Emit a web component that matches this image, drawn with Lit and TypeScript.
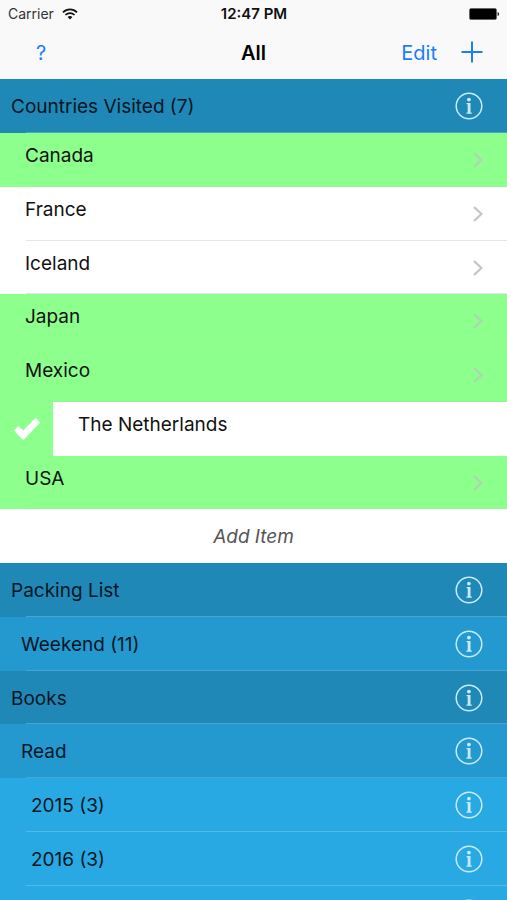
import { LitElement, html, css, svg, nothing } from "lit";
import { customElement, property, state } from "lit/decorators.js";
import { classMap } from "lit/directives/class-map.js";

interface Row {
  kind: "group" | "item" | "add";
  label?: string;
  depth?: number;
  done?: boolean;
  swiping?: boolean;
}

const ROWS: Row[] = [
  { kind: "group", label: "Countries Visited (7)", depth: 0 },
  { kind: "item", label: "Canada", done: true },
  { kind: "item", label: "France" },
  { kind: "item", label: "Iceland" },
  { kind: "item", label: "Japan", done: true },
  { kind: "item", label: "Mexico", done: true },
  { kind: "item", label: "The Netherlands", swiping: true },
  { kind: "item", label: "USA", done: true },
  { kind: "add", label: "Add Item" },
  { kind: "group", label: "Packing List", depth: 0 },
  { kind: "group", label: "Weekend (11)", depth: 1 },
  { kind: "group", label: "Books", depth: 0 },
  { kind: "group", label: "Read", depth: 1 },
  { kind: "group", label: "2015 (3)", depth: 2 },
  { kind: "group", label: "2016 (3)", depth: 2 },
  { kind: "group", depth: 2 },
];

const infoIcon = svg`<svg class="info-icon" viewBox="0 0 28 28" aria-hidden="true">
  <circle cx="14" cy="14" r="12.8" fill="none" stroke="currentColor" stroke-width="1.5"/>
  <circle cx="13.9" cy="7.6" r="1.9" fill="currentColor"/>
  <path d="M11.6 11H15.5V20.4H16.8V21.7H11.4V20.4H12.7V12.2H11.6Z" fill="currentColor"/>
</svg>`;

const chevron = svg`<svg class="chevron" viewBox="0 0 10 16" aria-hidden="true">
  <path d="M1 1L8.4 8L1 15" fill="none" stroke="currentColor" stroke-width="2.2"/>
</svg>`;

const check = svg`<svg class="check" viewBox="0 0 28 24" aria-hidden="true">
  <path d="M.8 13.6L5.4 9L10.2 13.6L22.6 .8L27.2 5.4L10.2 23.2Z" fill="currentColor"/>
</svg>`;

const buttonReset = css`
  button {
    margin: 0;
    padding: 0;
    border: 0;
    background: none;
    color: inherit;
    font: inherit;
    text-align: left;
    cursor: pointer;
  }
`;

@customElement("status-bar")
export class StatusBar extends LitElement {
  static styles = css`
    :host {
      display: grid;
      grid-template-columns: 1fr auto 1fr;
      align-items: center;
      height: 27px;
      padding: 0 7px 0 8px;
      color: #111;
    }
    .carrier {
      display: flex;
      align-items: center;
      gap: 8px;
      color: #333;
      font-size: 14px;
    }
    .time {
      font-size: 15px;
      font-weight: 600;
    }
    .wifi {
      width: 16px;
      height: 12px;
      color: #111;
    }
    .battery {
      justify-self: end;
      width: 31px;
      height: 12px;
    }
  `;

  render() {
    return html`
      <span class="carrier">
        Carrier
        <svg class="wifi" viewBox="0 0 16 12" role="img" aria-label="Wi-Fi">
          <path d="M1 4.3C5 .3 11 .3 15 4.3M3.4 7C6 4.5 10 4.5 12.6 7" fill="none" stroke="currentColor" stroke-width="1.7"/>
          <path d="M5.6 9C7 7.6 9 7.6 10.4 9L8 11.5Z" fill="currentColor"/>
        </svg>
      </span>
      <span class="time">12:47 PM</span>
      <svg class="battery" viewBox="0 0 31 12" role="img" aria-label="Battery full">
        <rect x="0.5" y="0.5" width="27" height="11" rx="1.5" fill="#000" stroke="#555" stroke-width="0.6"/>
        <path d="M28.6 4C30.6 4.4 30.6 7.6 28.6 8Z" fill="#222"/>
      </svg>
    `;
  }
}

@customElement("nav-bar")
export class NavBar extends LitElement {
  @property() heading = "";

  static styles = [
    buttonReset,
    css`
      :host {
        display: grid;
        grid-template-columns: 1fr auto 1fr;
        align-items: center;
        height: 52px;
        padding: 0 24px;
        color: #1a7efb;
        font-size: 20px;
        line-height: 24px;
      }
      h1 {
        margin: 0;
        color: #000;
        font-size: 20px;
        font-weight: 600;
      }
      .help {
        padding: 0 12px;
      }
      .actions {
        display: flex;
        justify-content: flex-end;
        align-items: flex-start;
        gap: 24px;
      }
      .plus {
        display: block;
        width: 22px;
        height: 22px;
      }
    `,
  ];

  render() {
    return html`
      <div><button type="button" class="help" aria-label="Help">?</button></div>
      <h1>${this.heading}</h1>
      <div class="actions">
        <button type="button">Edit</button>
        <button type="button" aria-label="Add list">
          <svg class="plus" viewBox="0 0 22 22" aria-hidden="true">
            <path d="M11 .5V21.5M.5 11H21.5" stroke="currentColor" stroke-width="2"/>
          </svg>
        </button>
      </div>
    `;
  }
}

@customElement("app-root")
export class AppRoot extends LitElement {
  @state() private rows = ROWS;

  static styles = [
    buttonReset,
    css`
      :host {
        display: flex;
        flex-direction: column;
        height: 100vh;
        overflow: hidden;
        background: #f9f9f9;
        color: #111;
        font-family: Inter, "Liberation Sans", sans-serif;
        font-size: 19px;
        line-height: 24px;
      }
      header {
        flex: none;
      }
      .list {
        flex: 1;
        min-height: 0;
        margin: 0;
        padding: 0;
        overflow-y: auto;
        scrollbar-width: none;
        list-style: none;
        background: #28a9e3;
      }
      .row {
        display: flex;
        box-sizing: border-box;
        height: 54px;
        background-color: var(--fill);
        background-image: linear-gradient(var(--rule, transparent), var(--rule, transparent));
        background-position: 26px 100%;
        background-repeat: no-repeat;
        background-size: 100% 1px;
      }
      .row:nth-child(4n) {
        height: 53px;
      }
      .group {
        align-items: center;
        justify-content: space-between;
        padding: 0 24px 0 11px;
        color: #04161f;
        --rule: #4aa6cf;
      }
      .label {
        padding-top: 2px;
      }
      .info {
        margin-left: auto;
      }
      .depth-0 {
        --fill: #1f88b6;
      }
      .depth-1 {
        --fill: #2399cf;
        padding-left: 21px;
      }
      .depth-2 {
        --fill: #28a9e3;
        --rule: #55b9e6;
        padding-left: 31px;
      }
      .item {
        --fill: #fff;
        --rule: #e4e4e6;
      }
      .done {
        --fill: #8cff8c;
        --rule: #94f69a;
      }
      .open {
        display: flex;
        flex: 1;
        align-items: flex-start;
        justify-content: space-between;
        padding: 11px 24px 0 25px;
      }
      .swiping {
        --rule: transparent;
      }
      .action {
        display: flex;
        flex: none;
        align-items: center;
        justify-content: center;
        width: 53px;
        background: #8cff8c;
        color: #fff;
      }
      .add {
        --fill: #fff;
        align-items: center;
        justify-content: center;
        color: #555;
        font-style: italic;
      }
      .info-icon {
        display: block;
        width: 28px;
        height: 28px;
        color: #c8ecfa;
      }
      .chevron {
        width: 10px;
        height: 16px;
        margin-top: 8px;
        color: #c4c4c8;
      }
      .done .chevron {
        color: #b2d2b4;
      }
      .check {
        width: 28px;
        height: 24px;
      }
    `,
  ];

  private renderRow(row: Row) {
    if (row.kind === "group") {
      return html`<li class="row group depth-${row.depth}">
        ${row.label ? html`<button type="button" class="label">${row.label}</button>` : nothing}
        <button type="button" class="info" aria-label="List details">${infoIcon}</button>
      </li>`;
    }
    if (row.kind === "add") {
      return html`<li class="row add"><button type="button" class="label">${row.label}</button></li>`;
    }
    const classes = { row: true, item: true, done: !!row.done, swiping: !!row.swiping };
    return html`<li class=${classMap(classes)}>
      ${row.swiping
        ? html`<button type="button" class="action" aria-label="Mark done">${check}</button>`
        : nothing}
      <button type="button" class="open">
        <span>${row.label}</span>
        ${row.swiping ? nothing : chevron}
      </button>
    </li>`;
  }

  render() {
    return html`
      <header>
        <status-bar></status-bar>
        <nav-bar heading="All"></nav-bar>
      </header>
      <ul class="list">
        ${this.rows.map((row) => this.renderRow(row))}
      </ul>
    `;
  }
}
